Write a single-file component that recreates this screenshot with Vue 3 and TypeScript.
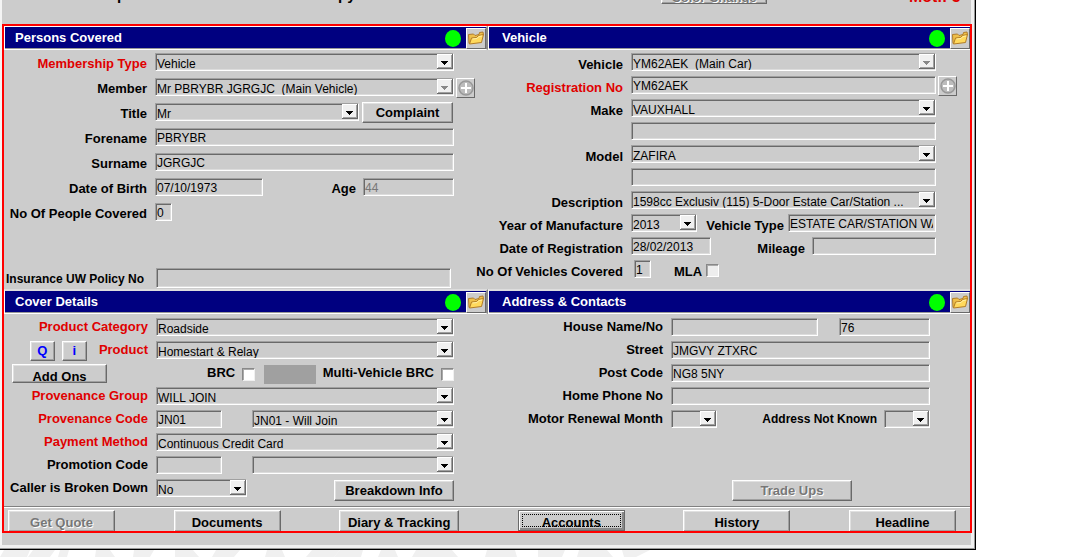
<script setup lang="ts">
type Kind = 'select' | 'input' | 'label' | 'button' | 'check' | 'block'

interface Part {
  kind: Kind
  id?: string
  value?: string
  size?: string
  muted?: boolean
}

interface Row {
  label?: string
  target?: string
  required?: boolean
  extra?: string
  tail?: boolean
  cls?: string
  parts: Part[]
}

interface Panel {
  key: string
  title: string
  rows: Row[]
}

const panels: Panel[] = [
  {
    key: 'persons',
    title: 'Persons Covered',
    rows: [
      { label: 'Membership Type', target: 'mtype', required: true, parts: [{ kind: 'select', id: 'mtype', value: 'Vehicle' }] },
      { label: 'Member', target: 'member', tail: true, parts: [{ kind: 'select', id: 'member', value: 'Mr PBRYBR JGRGJC \u00a0(Main Vehicle)', muted: true }] },
      { label: 'Title', target: 'title', parts: [{ kind: 'select', id: 'title', value: 'Mr' }, { kind: 'button', value: 'Complaint', size: 'complaint' }] },
      { label: 'Forename', target: 'forename', parts: [{ kind: 'input', id: 'forename', value: 'PBRYBR' }] },
      { label: 'Surname', target: 'surname', parts: [{ kind: 'input', id: 'surname', value: 'JGRGJC' }] },
      {
        label: 'Date of Birth', target: 'dob',
        parts: [
          { kind: 'input', id: 'dob', value: '07/10/1973', size: 'birth' },
          { kind: 'label', id: 'age', value: 'Age', size: 'push' },
          { kind: 'input', id: 'age', value: '44', size: 'short', muted: true },
        ],
      },
      { label: 'No Of People Covered', target: 'people', parts: [{ kind: 'input', id: 'people', value: '0', size: 'digit' }] },
      { label: 'Insurance UW Policy No', target: 'policy', cls: 'policy', parts: [{ kind: 'input', id: 'policy', value: '' }] },
    ],
  },
  {
    key: 'vehicle',
    title: 'Vehicle',
    rows: [
      { label: 'Vehicle', target: 'vehicle', parts: [{ kind: 'select', id: 'vehicle', value: 'YM62AEK \u00a0(Main Car)', muted: true }] },
      { label: 'Registration No', target: 'reg', required: true, tail: true, parts: [{ kind: 'input', id: 'reg', value: 'YM62AEK' }] },
      { label: 'Make', target: 'make', parts: [{ kind: 'select', id: 'make', value: 'VAUXHALL' }] },
      { parts: [{ kind: 'input', id: 'make-other', value: '' }] },
      { label: 'Model', target: 'model', parts: [{ kind: 'select', id: 'model', value: 'ZAFIRA' }] },
      { parts: [{ kind: 'input', id: 'model-other', value: '' }] },
      { label: 'Description', target: 'desc', parts: [{ kind: 'select', id: 'desc', value: '1598cc Exclusiv (115) 5-Door Estate Car/Station ...' }] },
      {
        label: 'Year of Manufacture', target: 'year',
        parts: [
          { kind: 'select', id: 'year', value: '2013', size: 'code' },
          { kind: 'label', id: 'vtype', value: 'Vehicle Type', size: 'push tight' },
          { kind: 'input', id: 'vtype', value: 'ESTATE CAR/STATION WAGON', size: 'half' },
        ],
      },
      {
        label: 'Date of Registration', target: 'regdate',
        parts: [
          { kind: 'input', id: 'regdate', value: '28/02/2013', size: 'date' },
          { kind: 'label', id: 'mileage', value: 'Mileage', size: 'push' },
          { kind: 'input', id: 'mileage', value: '', size: 'miles' },
        ],
      },
      {
        label: 'No Of Vehicles Covered', target: 'vehicles',
        parts: [
          { kind: 'input', id: 'vehicles', value: '1', size: 'digit inset' },
          { kind: 'label', id: 'mla', value: 'MLA', size: 'mla' },
          { kind: 'check', id: 'mla', size: 'pale' },
        ],
      },
    ],
  },
  {
    key: 'cover',
    title: 'Cover Details',
    rows: [
      { label: 'Product Category', target: 'category', required: true, parts: [{ kind: 'select', id: 'category', value: 'Roadside' }] },
      { label: 'Product', target: 'product', required: true, extra: 'lookup', parts: [{ kind: 'select', id: 'product', value: 'Homestart & Relay' }] },
      {
        extra: 'addons',
        parts: [
          { kind: 'label', id: 'brc', value: 'BRC', size: 'brc' },
          { kind: 'check', id: 'brc' },
          { kind: 'block' },
          { kind: 'label', id: 'multi', value: 'Multi-Vehicle BRC', size: 'push' },
          { kind: 'check', id: 'multi' },
        ],
      },
      { label: 'Provenance Group', target: 'group', required: true, parts: [{ kind: 'select', id: 'group', value: 'WILL JOIN' }] },
      {
        label: 'Provenance Code', target: 'code', required: true, cls: 'pair',
        parts: [{ kind: 'input', id: 'code', value: 'JN01', size: 'code' }, { kind: 'select', id: 'code-name', value: 'JN01 - Will Join' }],
      },
      { label: 'Payment Method', target: 'payment', required: true, parts: [{ kind: 'select', id: 'payment', value: 'Continuous Credit Card' }] },
      {
        label: 'Promotion Code', target: 'promo', cls: 'pair',
        parts: [{ kind: 'input', id: 'promo', value: '', size: 'code' }, { kind: 'select', id: 'promo-name', value: '' }],
      },
      {
        label: 'Caller is Broken Down', target: 'caller',
        parts: [{ kind: 'select', id: 'caller', value: 'No', size: 'short' }, { kind: 'button', value: 'Breakdown Info', size: 'wide push' }],
      },
    ],
  },
  {
    key: 'address',
    title: 'Address & Contacts',
    rows: [
      {
        label: 'House Name/No', target: 'house', cls: 'house',
        parts: [{ kind: 'input', id: 'house', value: '' }, { kind: 'input', id: 'house-no', value: '76', size: 'short' }],
      },
      { label: 'Street', target: 'street', parts: [{ kind: 'input', id: 'street', value: 'JMGVY ZTXRC' }] },
      { label: 'Post Code', target: 'postcode', parts: [{ kind: 'input', id: 'postcode', value: 'NG8 5NY' }] },
      { label: 'Home Phone No', target: 'phone', parts: [{ kind: 'input', id: 'phone', value: '' }] },
      {
        label: 'Motor Renewal Month', target: 'month',
        parts: [
          { kind: 'select', id: 'month', value: '', size: 'tiny' },
          { kind: 'label', id: 'unknown', value: 'Address Not Known', size: 'push small' },
          { kind: 'select', id: 'unknown', value: '', size: 'tiny' },
        ],
      },
      { cls: 'trade', parts: [{ kind: 'button', value: 'Trade Ups', size: 'wide', muted: true }] },
    ],
  },
]

const actions = [
  { text: 'Get Quote', cls: 'disabled' },
  { text: 'Documents', cls: '' },
  { text: 'Diary & Tracking', cls: 'wide' },
  { text: 'Accounts', cls: 'focused' },
  { text: 'History', cls: '' },
  { text: 'Headline', cls: '' },
]
</script>

<template>
  <div class="page">
    <main class="window">
      <header class="top">
        <span class="caption first">p</span>
        <span class="caption second">py</span>
        <button class="btn disabled color" type="button">Color Change</button>
        <strong class="mode">Motif 5</strong>
      </header>

      <div class="frame">
        <div class="panels">
          <section v-for="p in panels" :key="p.key" :class="['panel', p.key]">
            <div class="head">
              <h2>{{ p.title }}</h2>
              <svg class="lamp" viewBox="0 0 16 17" aria-hidden="true">
                <ellipse cx="8" cy="8.5" rx="8" ry="8.5" fill="#0f0" />
              </svg>
              <button class="folder" type="button" :aria-label="p.title">
                <svg viewBox="0 0 18 16" aria-hidden="true">
                  <path d="M2 13.500 L1.500 4.500 L6.500 4 L8 5.500 L12 4.500 L12.500 2.500 L16 2 L16.500 5" fill="#efc04a" stroke="#b07c2c" />
                  <path d="M2.500 14 L4.500 8 L9.500 7.500 L11.500 5.500 L16.500 4.500 L14.500 12.500 Z" fill="#ffd95c" stroke="#b27c25" />
                  <path d="M5.500 9 L10 8.500 L12 6.500 L15 6" fill="none" stroke="#fff0a8" />
                </svg>
              </button>
            </div>

            <div class="body">
              <div v-for="(r, i) in p.rows" :key="i" :class="['row', r.cls]">
                <div class="lead">
                  <button v-if="r.extra === 'addons'" class="btn addons" type="button">Add Ons</button>
                  <template v-if="r.extra === 'lookup'">
                    <button class="btn mini" type="button">Q</button>
                    <button class="btn mini" type="button">i</button>
                  </template>
                  <label v-if="r.label" :for="r.target" :class="{ required: r.required }">{{ r.label }}</label>
                </div>

                <div class="parts">
                  <template v-for="(c, j) in r.parts" :key="j">
                    <span v-if="c.kind === 'select'" :class="['combo', c.size, { muted: c.muted }]">
                      <select :id="c.id" :aria-label="c.id">
                        <option>{{ c.value }}</option>
                      </select>
                      <svg class="arrow" viewBox="0 0 16 15" aria-hidden="true">
                        <path d="M0 0h16v15H0z" fill="#696969" />
                        <path d="M0 0h15v14H0z" fill="#fff" />
                        <path d="M1 1h14v13H1z" fill="#a0a0a0" />
                        <path d="M1 1h13v12H1z" fill="#f0f0f0" />
                        <path class="tip" d="M4 7h7v1h-1v1h-1v1h-1v1h-1v-1h-1v-1h-1v-1h-1z" />
                      </svg>
                    </span>
                    <input
                      v-else-if="c.kind === 'input'"
                      :id="c.id" type="text" :value="c.value" :aria-label="c.id"
                      :class="['text', c.size, { muted: c.muted }]"
                    />
                    <label v-else-if="c.kind === 'label'" :for="c.id" :class="['inner', c.size]">{{ c.value }}</label>
                    <input v-else-if="c.kind === 'check'" :id="c.id" type="checkbox" :class="['check', c.size]" />
                    <span v-else-if="c.kind === 'block'" class="block"></span>
                    <button v-else type="button" :class="['btn', c.size, { disabled: c.muted }]">{{ c.value }}</button>
                  </template>
                </div>

                <div class="tail">
                  <button v-if="r.tail" class="add" type="button" aria-label="Add">
                    <svg viewBox="0 0 16 16" aria-hidden="true">
                      <circle cx="8" cy="8" r="7" fill="#bcbcbc" stroke="#989898" stroke-width="1.500" />
                      <path d="M8 3v10M3 8h10" stroke="#fff" stroke-width="2" />
                    </svg>
                  </button>
                </div>
              </div>
            </div>
          </section>
        </div>

        <nav class="actions">
          <button v-for="a in actions" :key="a.text" type="button" :class="['btn', a.cls]">{{ a.text }}</button>
        </nav>
      </div>
    </main>

    <svg class="mark" viewBox="0 0 660 7" aria-hidden="true">
      <g fill="#f0f0f0">
        <path d="M4 0h26l-3 7H0zM33 0h22l-5 7H28zM60 0h9l-2 7h-9zM96 0h14l5 7H95zM134 0h20l-4 7h-17zM175 0h18l6 7h-24zM216 0h24l-6 7h-22zM267 0h15l3 7h-20zM312 0h28l-6 7h-28z" />
        <path d="M340 0h23l-2 7h-27zM381 0h14l3 7h-20zM416 0h36l6 7h-46zM487 0h28l2 7h-32zM538 0h27l-3 7h-24zM579 0h28l6 7h-36zM622 0h28l-14 7h-12z" />
      </g>
    </svg>
  </div>
</template>

<style>
body {
  margin: 0;
  background: #fff;
}
</style>

<style scoped>
* {
  box-sizing: border-box;
}

.page {
  font-family: "Liberation Sans", Arial, sans-serif;
  font-size: 13px;
  line-height: 18px;
  color: #000;
  padding-right: 95px;
}

.window {
  background: #ccc;
  border: solid #000;
  border-width: 0 1px 1px 0;
  box-shadow: inset -1px -1px 0 #999, inset -4px -4px 0 #f0f0f0, inset 2px 0 0 #f4f4f4;
  padding: 0 3px 16px 2px;
}

.top {
  display: flex;
  align-items: flex-end;
  height: 4px;
  margin-bottom: 20px;
  overflow: hidden;
}

.caption {
  font-size: 15px;
  font-weight: bold;
  height: 18px;
}

.first {
  width: 221px;
  margin-left: 115px;
}

.top .color {
  width: 106px;
  margin-left: auto;
  padding-top: 5px;
}

.mode {
  width: 63px;
  margin-left: 142px;
  color: #e00000;
  font-size: 16px;
  line-height: 14px;
}

.frame {
  border: 2px solid #f00;
}

.panels {
  display: grid;
  grid-template-columns: minmax(0, 484fr) minmax(0, 482fr);
}

.head {
  display: flex;
  align-items: center;
  height: 24px;
  background: #000080;
  border: solid #fff;
  border-width: 1px 0 1px 1px;
  box-shadow: inset 0 -1px 0 #999;
}

.persons .head,
.cover .head {
  border-right: 2px solid #888;
}

.cover .head,
.address .head {
  height: 25px;
  border-top-width: 2px;
  border-top-color: #ddd;
}

h2 {
  flex: 1;
  margin: 0 0 0 10px;
  font-size: 13px;
  line-height: 18px;
  color: #fff;
}

.vehicle h2,
.address h2 {
  margin-left: 13px;
}

.lamp {
  width: 16px;
  height: 17px;
  margin-right: 5px;
}

.folder,
.add {
  display: grid;
  place-items: center;
  width: 20px;
  height: 21px;
  padding: 0;
  background: #ccc;
  border: 1px solid;
  border-color: #fff #696969 #696969 #fff;
}

.folder svg {
  width: 18px;
  height: 16px;
}

.add {
  width: 19px;
  height: 20px;
  margin-left: 2px;
}

.add svg {
  width: 16px;
  height: 16px;
}

.body {
  display: flex;
  flex-direction: column;
  gap: 5px;
  padding: 4px 0 5px;
}

.persons .body {
  gap: 7px;
  padding: 3px 0 1px;
}

.vehicle .body {
  padding-top: 3px;
}

.row {
  display: grid;
  grid-template-columns: 151px minmax(0, 1fr) 34px;
  height: 18px;
}

.vehicle .row {
  grid-template-columns: 143px minmax(0, 1fr) 34px;
}

.cover .row {
  grid-template-columns: 152px minmax(0, 1fr) 34px;
}

.address .row {
  grid-template-columns: 183px minmax(0, 1fr) 40px;
}

.lead {
  display: flex;
  justify-content: flex-end;
  align-items: flex-start;
  gap: 7px;
  padding-right: 8px;
  white-space: nowrap;
}

.persons .lead,
.persons .inner {
  padding-top: 2px;
}

.vehicle .lead,
.vehicle .inner {
  padding-top: 3px;
}

label {
  font-weight: bold;
  white-space: nowrap;
}

.required {
  color: #e00000;
}

.lead .mini + label {
  margin-left: 5px;
}

.parts {
  display: flex;
  align-items: flex-start;
}

.pair .parts {
  gap: 30px;
}

.house .parts {
  gap: 21px;
}

.text,
select {
  width: 100%;
  height: 18px;
  margin: 0;
  border: 1px solid;
  border-color: #a0a0a0 #fff #fff #a0a0a0;
  border-radius: 0;
  box-shadow: inset 1px 1px 0 #696969, inset -1px -1px 0 #dcdcdc;
  background: #ccc;
  color: #000;
  font: 12px/16px "Liberation Sans", Arial, sans-serif;
  outline: none;
}

.text {
  flex: 1 1 0;
  min-width: 0;
  padding: 2px 2px 0 1px;
}

.text.muted {
  color: #777;
}

select {
  appearance: none;
  padding: 2px 18px 0 1px;
}

.combo {
  display: grid;
  flex: 1 1 0;
  min-width: 0;
  height: 18px;
}

.combo > * {
  grid-area: 1 / 1;
}

.arrow {
  justify-self: end;
  width: 16px;
  height: 15px;
  margin: 1px 1px 0 0;
  pointer-events: none;
}

.muted .tip {
  fill: #888;
}

.birth { flex: 0 0 108px; }
.short { flex: 0 0 91px; }
.digit { flex: 0 0 17px; }
.code { flex: 0 0 66px; }
.date { flex: 0 0 80px; }
.half { flex: 0 0 148px; }
.miles { flex: 0 0 124px; }
.tiny { flex: 0 0 46px; }
.inset { margin-left: 3px; }

.inner {
  margin-right: 7px;
}

.push {
  margin-left: auto;
}

.tight {
  margin-right: 4px;
}

.small {
  font-size: 12px;
}

.mla {
  margin-left: 23px;
  margin-right: 4px;
}

.brc {
  margin-left: 51px;
}

.check {
  appearance: none;
  flex: none;
  width: 13px;
  height: 13px;
  margin: 4px 0 0;
  border: 1px solid;
  border-color: #888 #f0f0f0 #f0f0f0 #888;
  box-shadow: inset 1px 1px 0 #aaa;
  background: #fff;
}

.check.pale {
  background: #eee;
  border-right-color: #fff;
  border-bottom-color: #fff;
}

.block {
  width: 52px;
  height: 19px;
  margin: 1px 0 0 9px;
  background: #a0a0a0;
}

.btn {
  flex: none;
  height: 21px;
  padding: 0;
  border: 1px solid;
  border-color: #fff #696969 #696969 #fff;
  border-radius: 0;
  box-shadow: inset -1px -1px 0 #a0a0a0, inset 1px 1px 0 #e0e0e0;
  background: #ccc;
  color: #000;
  font: bold 13px/18px "Liberation Sans", Arial, sans-serif;
  white-space: nowrap;
  overflow: hidden;
}

.btn.complaint {
  width: 91px;
  margin: -1px 1px 0 3px;
}

.btn.wide {
  width: 120px;
  margin-top: 1px;
}

.btn.disabled {
  color: #777;
  text-shadow: 1px 1px 0 #fff;
}

.btn.mini {
  width: 25px;
  height: 20px;
  color: #00f;
}

.btn.addons {
  width: 95px;
  height: 19px;
  margin-right: 41px;
  padding-top: 3px;
}

.policy {
  height: 20px;
  margin-top: 40px;
}

.persons .policy {
  grid-template-columns: 152px minmax(0, 1fr) 37px;
}

.policy .text {
  height: 20px;
}

.policy label {
  font-size: 12px;
}

.policy .lead {
  padding-right: 12px;
}

.trade {
  height: 22px;
  margin-top: 46px;
}

.trade .parts {
  padding-left: 61px;
}

.actions {
  display: flex;
  justify-content: space-between;
  border-top: 1px solid #808080;
  box-shadow: inset 0 1px 0 #fff;
  padding: 3px 14px 0 4px;
}

.actions .btn {
  width: 107px;
  padding-top: 3px;
  border-bottom: 0;
}

.actions .wide {
  width: 120px;
  margin: 0;
}

.actions .focused {
  border: 1px solid #696969;
  box-shadow: inset 1px 1px 0 #fff, inset -2px -2px 0 #888;
  outline: 1px dotted #000;
  outline-offset: -5px;
}

.mark {
  display: block;
  width: 660px;
  height: 7px;
}
</style>
